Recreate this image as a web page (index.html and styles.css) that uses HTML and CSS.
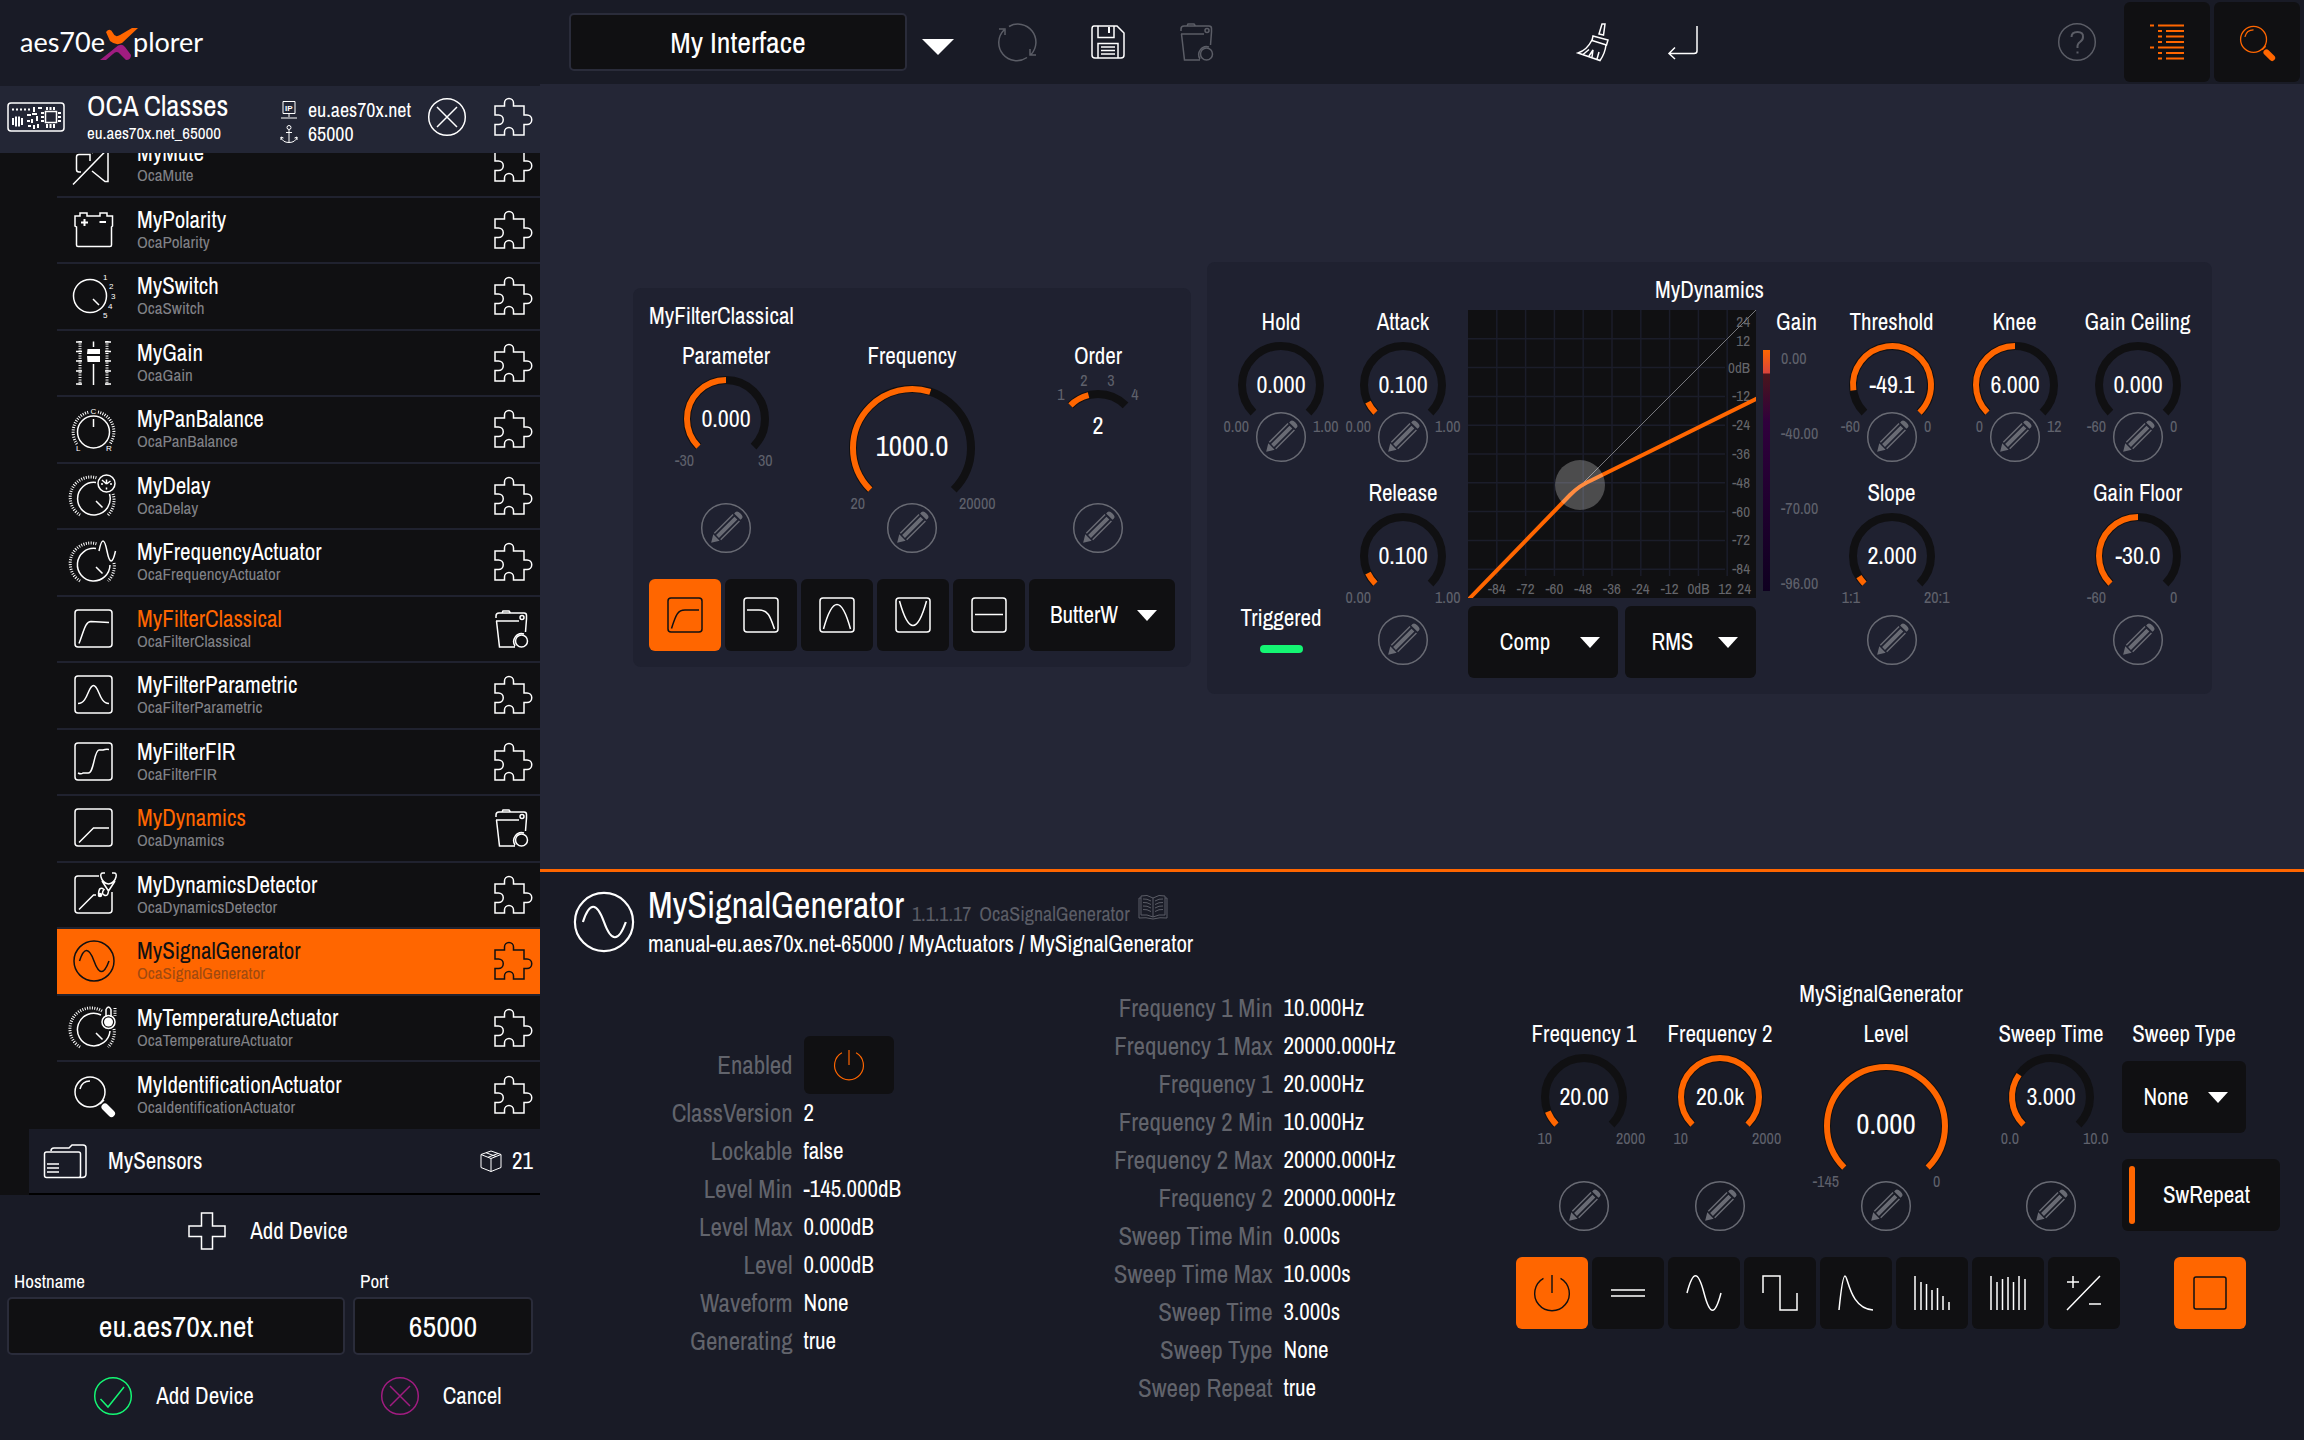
FILE: index.html
```html
<!DOCTYPE html>
<html lang="en">

<head>
    <meta charset="UTF-8">
    <meta name="viewport" content="width=device-width, initial-scale=1.0">
    <title>aes70explorer</title>
    <link rel="stylesheet" href="styles.css">
</head>

<body>
    <!-- icon sprite -->
    <svg class="sprite" aria-hidden="true">
        <symbol id="puzzle" viewBox="0 0 38 38">
            <path d="M1 8H10.500V5a4.500 4.500 0 0 1 9 0V8H30V17h3a4.500 4.500 0 0 1 0 9.500h-3V37H19.500V34a4.500 4.500 0 0 0-9 0v3H1V26.500H4.500a4.500 4.500 0 0 0 0-9.500H1Z"/>
        </symbol>
        <symbol id="trash" viewBox="0 0 38 38">
            <path d="M2 8V6q0-3 3-3H30q2.500 0 2.500 2.500V9l-1 13M8 3l1-2h6l1.500 2M2 11H25M2.500 11 5.500 37H21M30 24a8 8 0 0 0-9 12"/>
            <circle cx="28" cy="7.500" r="2"/>
            <circle cx="27.500" cy="31" r="6"/>
        </symbol>
        <symbol id="mute" viewBox="0 0 44 44">
            <path d="M1 43.500 40 3.500M9 31H7q-2.500 0-2.500-2.500V16q0-2.500 2.500-2.500H18V20M20 30 33 40.500h3V12M20 12 31 4"/>
        </symbol>
        <symbol id="polarity" viewBox="0 0 44 44">
            <path d="M3 8H8V5h7v3H28V5h7v3h5.500V18L39.500 19V37q0 1.500-1.500 1.500H6Q4.500 38.500 4.500 37V19L3 18Z"/>
            <path class="bold" d="M9 14.500h7M12.500 11v7M27.500 14h6.500"/>
        </symbol>
        <symbol id="switch" viewBox="0 0 44 44">
            <circle cx="18" cy="22" r="16.500"/>
            <path d="M21 25l6 6"/>
            <text x="31" y="6">1</text><text x="37" y="15">2</text><text x="39" y="25">3</text><text x="36" y="35">4</text><text x="31" y="44">5</text>
        </symbol>
        <symbol id="gain" viewBox="0 0 44 44">
            <path d="M21.500 .5V6M21.500 23V44"/>
            <path class="ticks" d="M8 0V44M35 0V44"/>
            <path d="M4 1h6M4 10.500h6M4 20h6M4 30h6M4 43h6M33 1h6M33 10.500h6M33 20h6M33 30h6M33 43h6"/>
            <path class="solid" d="M15.500 8H28L28 13H15ZM15 15H28L28 21H15.500Z"/>
        </symbol>
        <symbol id="pan" viewBox="0 0 44 44">
            <circle cx="21.500" cy="25" r="16"/>
            <path d="M21.500 12v8"/>
            <path class="ticks" d="M5 37A20.500 20.500 0 0 1 17 5M26 5A20.500 20.500 0 0 1 38 37"/>
            <text x="18.500" y="7">C</text><text x="4" y="44">L</text><text x="34" y="44">R</text>
        </symbol>
        <symbol id="delay" viewBox="0 0 44 44">
            <path d="M24 8.500A16.300 16.300 0 1 0 37.500 20M24 27l6.500 6.500M34.500 9.500V5.500M34.500 10 30 6M34.500 10l4-3M29 10h2M38 10h2M34.500 13.500v2"/>
            <path class="ticks" d="M8 41A20.500 20.500 0 0 1 25 4M41 20A20.500 20.500 0 0 1 36 41"/>
            <circle cx="34.500" cy="9.500" r="8.500"/>
        </symbol>
        <symbol id="freq" viewBox="0 0 44 44">
            <path d="M24 8.500A16.300 16.300 0 1 0 38 25M24 27l6.500 6.500M27 11Q31-9 35 11T43.500 11"/>
            <path class="ticks" d="M8 41A20.500 20.500 0 0 1 25 4M42 23A20.500 20.500 0 0 1 36 41"/>
        </symbol>
        <symbol id="temp" viewBox="0 0 44 44">
            <path d="M29 9A16.300 16.300 0 1 0 38 25M24 27l6.500 6.500M34 11V3.500q2.500-5 5 0v7.500"/>
            <path class="ticks" d="M8 41A20.500 20.500 0 0 1 30 5M42 23A20.500 20.500 0 0 1 36 41M43 2v8"/>
            <circle class="solid" cx="36.500" cy="16" r="4.500"/>
            <circle cx="36.500" cy="16" r="6.500"/>
        </symbol>
        <symbol id="classical" viewBox="0 0 44 44">
            <rect x="3" y="3" width="37" height="37" rx="3"/>
            <path d="M7 36.500C12 24 13 14.500 19 14.500L37 15.500"/>
        </symbol>
        <symbol id="parametric" viewBox="0 0 44 44">
            <rect x="3" y="3" width="37" height="37" rx="3"/>
            <path d="M6 30.500C16 30.500 16 12.500 21.500 12.500S27 30.500 37 30.500"/>
        </symbol>
        <symbol id="fir" viewBox="0 0 44 44">
            <rect x="3" y="3" width="37" height="37" rx="3"/>
            <path d="M6 33q3 1.500 5 0h5C22 34 22 10 27 10h4q3-1 6-.5"/>
        </symbol>
        <symbol id="dynamics" viewBox="0 0 44 44">
            <rect x="3" y="3" width="37" height="37" rx="3"/>
            <path d="M7 36.500 21.500 22H37"/>
        </symbol>
        <symbol id="detector" viewBox="0 0 44 44">
            <path d="M27 3H6Q3 3 3 6V37q0 3 3 3H37q3 0 3-3V19M7 36.500 21.500 22H24M33 0h-2q-3 0-2 4 1.500 6 7.500 7 6-1 7.500-7 1-4-2-4H40M30 8l6.500 10L43 8M36.500 18q-.5 6-4.500 4-3-2 0-5.500-5-4-5.500 4.500"/>
            <circle class="solid" cx="28" cy="22" r="2.300"/>
        </symbol>
        <symbol id="signal" viewBox="0 0 44 44">
            <circle cx="22" cy="22" r="20"/>
            <path d="M7.500 22C12 8 17 8 22 22S32 36 37 22"/>
        </symbol>
        <symbol id="glass" viewBox="0 0 44 44">
            <circle cx="18" cy="19" r="15"/>
            <path d="M8 16q2-8 10-8M28 31l4-4"/>
            <path class="handle" d="M33 34l6.500 6.500"/>
        </symbol>
        <symbol id="folder" viewBox="0 0 44 44">
            <path d="M3.500 38.500h32q2 0 2-2V15q0-2-2-2H3.500q-2 0-2 2V36.500q0 2 2 2ZM8 12q0-3 3-3H26l3-3h11q3 0 3 3V35q0 3.500-4 3.500H36M4 25H16M4 29H16M4 33H16"/>
        </symbol>
        <symbol id="cube" viewBox="0 0 22 22">
            <path d="M11 1 21 4.500V17.500L11 21.500 1 17.500V4.500ZM1 4.500 11 8.500 21 4.500M11 8.500V21.500M6 2.700 16 6.500M8 7.300l10-3.800"/>
        </symbol>
        <symbol id="board" viewBox="0 0 58 30">
            <rect x="1" y="1" width="56" height="28" rx="3"/>
            <rect x="38.500" y="9.500" width="11" height="11"/>
            <path class="bold" d="M5 7.500h2M9 7.500h2M13 7.500h2M17 7.500h2M21 7.500h2M6 16v7M9 14.500v10M12 14.500v10M15 16v7M20 13h4M27 5v5M31 6h4M25 12h5M20 19h3M25 17v4M30 14v5M27 23v4M31 22v4M21 24h3M40 5v3M43.500 5v3M47 5v3M40 22v4M43.500 22v4M47 22v4M34 11h3M34 15h3M34 19h3M51 11h3M51 15h3M51 19h3"/>
        </symbol>
        <symbol id="ip" viewBox="0 0 18 18">
            <path d="M3 .5H15V12.500H3ZM9 12.500V16M1 17H17"/>
            <text class="strong" x="5" y="10">IP</text>
        </symbol>
        <symbol id="anchor" viewBox="0 0 18 18">
            <circle cx="9" cy="2.500" r="2"/>
            <path d="M9 5V17.500M6 7.500h6M1 12q1.500 5.500 8 5.500t8-5.500M1 15v-3l2.500 1M17 15v-3l-2.500 1"/>
        </symbol>
        <symbol id="cross" viewBox="0 0 38 38">
            <circle cx="19" cy="19" r="18.300"/>
            <path d="M9 9 29 29M29 9 9 29"/>
        </symbol>
        <symbol id="check" viewBox="0 0 38 38">
            <circle cx="19" cy="19" r="18.300"/>
            <path d="M6.500 22l7.500 8L30 10"/>
        </symbol>
        <symbol id="plus" viewBox="0 0 38 38">
            <path d="M13.500 1h11V14H37V24.500H24.500V37h-11V24.500H1V14H13.500Z"/>
        </symbol>
        <symbol id="reload" viewBox="0 0 38 38">
            <path d="M10 3.500A18 18 0 0 1 32 31.500M28 34.500A18 18 0 0 1 5 7M0 6h6v6M31 26v6h6"/>
        </symbol>
        <symbol id="save" viewBox="0 0 38 38">
            <path d="M5 3H28L35 10V32q0 3-3 3H6q-3 0-3-3V6q0-3 2-3ZM9 3V14.500H25V3M9 35V20.500H29V35M12 24H26M12 27.500H26M12 31H26"/>
            <path class="bold" d="M20 4v6"/>
        </symbol>
        <symbol id="broom" viewBox="0 0 38 38">
            <path d="M28 1h3l-1.500 11-4.500-1ZM19 13l15 4-1.500 5L18 17.500ZM18 17Q13 27 4 30l22 7.500q5-7 6-15.500M9 31.500l6-5M15 33l4-6-1 7M23 36l2-7"/>
        </symbol>
        <symbol id="enter" viewBox="0 0 38 38">
            <path d="M33 3V28q0 2.500-3 2.500H5M11 24.500 5 30.500l6 5.500"/>
        </symbol>
        <symbol id="help" viewBox="0 0 38 38">
            <circle cx="19" cy="19" r="18.300"/>
            <path class="bold" d="M13.500 14q0-5 6-5t5.500 5q0 3-3 5t-2.500 6M19.500 28.500v2"/>
        </symbol>
        <symbol id="list" viewBox="0 0 38 38">
            <path class="bold" d="M2 2.500h4M10 2.500H36M10 8h4M18 8H36M10 13.500h4M18 13.500H36M10 19h4M18 19H36M2 24.500h4M10 24.500H36M10 30h4M18 30H36M10 35.500h4M18 35.500H36"/>
        </symbol>
        <symbol id="pencil" viewBox="0 0 50 50">
            <circle cx="25" cy="25" r="24.300"/>
            <g transform="rotate(45 25 25)">
                <path class="solid" d="M20.500 9V7q0-2.500 4.500-2.500T29.500 7v2ZM20.500 38.500h9L25 46ZM23 11h4V37h-4Z"/>
                <path d="M20.500 10.500V37M29.500 10.500V37"/>
            </g>
        </symbol>
        <symbol id="book" viewBox="0 0 30 26">
            <path d="M15 4Q9 0 3 2V21q6-1 12 2 6-3 12-2V2q-6-2-12 2ZM15 4V23M3 4H1V24q7-1 14 1 7-2 14-1V4H27M5 5q4-.5 8 2M5 8.500q4-.5 8 2M5 12q4-.5 8 2M5 15.500q4-.5 8 2M25 5q-4-.5-8 2M25 8.500q-4-.5-8 2M25 12q-4-.5-8 2M25 15.500q-4-.5-8 2"/>
        </symbol>
        <symbol id="power" viewBox="0 0 38 38">
            <path d="M10 3.500A18.300 18.300 0 1 0 28 3.500M19 0V19"/>
        </symbol>
        <symbol id="highpass" viewBox="0 0 36 36">
            <rect x="1" y="1" width="34" height="34" rx="3"/>
            <path d="M4.500 31.500C9 17 11 13 18 13H32"/>
        </symbol>
        <symbol id="lowpass" viewBox="0 0 36 36">
            <rect x="1" y="1" width="34" height="34" rx="3"/>
            <path d="M4 13H16C25 13 27 19 31.500 32"/>
        </symbol>
        <symbol id="bandpass" viewBox="0 0 36 36">
            <rect x="1" y="1" width="34" height="34" rx="3"/>
            <path d="M4.500 32Q18-17 31.500 32"/>
        </symbol>
        <symbol id="bandstop" viewBox="0 0 36 36">
            <rect x="1" y="1" width="34" height="34" rx="3"/>
            <path d="M4.500 4Q18 53 31.500 4"/>
        </symbol>
        <symbol id="allpass" viewBox="0 0 36 36">
            <rect x="1" y="1" width="34" height="34" rx="3"/>
            <path d="M4 17.500H32"/>
        </symbol>
        <symbol id="dc" viewBox="0 0 36 36"><path d="M1 15H35M1 21H35"/></symbol>
        <symbol id="sine" viewBox="0 0 36 36"><path d="M1 18C7-5 12-5 18 18S29 41 35 18"/></symbol>
        <symbol id="square" viewBox="0 0 36 36"><path d="M1 18V1H18V35H35V18"/></symbol>
        <symbol id="impulse" viewBox="0 0 36 36"><path d="M1 35C3 15 5 1 7 1 10 1 12 34 35 35"/></symbol>
        <symbol id="pink" viewBox="0 0 36 36"><path d="M1 1V35M7 7V35M12.500 9V35M18 15V35M23.500 13V35M29 21V35M35 27V35"/></symbol>
        <symbol id="white" viewBox="0 0 36 36"><path d="M1 1V35M7 7V35M12.500 4V35M18 2V35M23.500 7V35M29 1V35M35 4V35"/></symbol>
        <symbol id="sweep" viewBox="0 0 36 36"><path d="M1 35 34 1M1 7H13M7 1V13M23 29H35"/></symbol>
        <symbol id="stop" viewBox="0 0 36 36"><rect x="2" y="2" width="32" height="32" rx="2"/></symbol>
    </svg>

    <header class="topbar">
        <div class="brand">
            <svg class="logo" viewBox="0 0 186 40" role="img" aria-label="aes70explorer">
                <text x="0" y="28">aes70e</text>
                <path class="logo-top" d="M86 8q4-5 7 1 2 5 7 2L112 4h6L102 19q-6 3-12-2Z"/>
                <path class="logo-bottom" d="M80 36 95 24q6-6 10-1l6 8q0 5-5 5l-6-6q-3-4-7 0l-7 6Z"/>
                <text x="113" y="28">plorer</text>
            </svg>
        </div>
        <div class="toolbar">
            <div class="tools">
                <input class="field interface-name" type="text" value="My Interface" aria-label="Interface name">
                <button class="tool tool-caret" aria-label="Select interface"><span class="caret caret-big"></span></button>
                <button class="tool dim" aria-label="Reload"><svg class="icon"><use href="#reload"/></svg></button>
                <button class="tool" aria-label="Save"><svg class="icon"><use href="#save"/></svg></button>
                <button class="tool dim" aria-label="Delete"><svg class="icon"><use href="#trash"/></svg></button>
            </div>
            <div class="tools">
                <button class="tool" aria-label="Clear"><svg class="icon"><use href="#broom"/></svg></button>
                <button class="tool" aria-label="Enter"><svg class="icon"><use href="#enter"/></svg></button>
            </div>
            <div class="tools">
                <button class="tool dim" aria-label="Help"><svg class="icon"><use href="#help"/></svg></button>
                <button class="tool tool-on" aria-label="Tree"><svg class="icon"><use href="#list"/></svg></button>
                <button class="tool tool-on" aria-label="Details"><svg class="icon"><use href="#glass"/></svg></button>
            </div>
        </div>
    </header>

    <div class="content">
        <aside class="sidebar">
            <div class="device">
                <svg class="icon-board"><use href="#board"/></svg>
                <div class="device-name">
                    <h1>OCA Classes</h1>
                    <p>eu.aes70x.net_65000</p>
                </div>
                <div class="device-host">
                    <span><svg class="icon-tiny"><use href="#ip"/></svg>eu.aes70x.net</span>
                    <span><svg class="icon-tiny"><use href="#anchor"/></svg>65000</span>
                </div>
                <button class="plain" aria-label="Remove device"><svg class="icon"><use href="#cross"/></svg></button>
                <button class="plain" aria-label="Add all"><svg class="icon"><use href="#puzzle"/></svg></button>
            </div>

            <div class="tree">
                <ul id="tree"></ul>
            </div>

            <form class="add-device" id="form">
                <div class="add-title"><svg class="icon"><use href="#plus"/></svg>Add Device</div>
                <div class="add-grid">
                    <div>
                        <label for="hostname">Hostname</label>
                        <input class="field" type="text" id="hostname" value="eu.aes70x.net">
                    </div>
                    <div>
                        <label for="port">Port</label>
                        <input class="field" type="text" id="port" value="65000">
                    </div>
                    <button type="submit" class="form-btn"><svg class="icon green"><use href="#check"/></svg>Add Device</button>
                    <button type="button" class="form-btn"><svg class="icon purple"><use href="#cross"/></svg>Cancel</button>
                </div>
            </form>
        </aside>

        <main class="main">
            <section class="canvas">
                <div class="panel panel-filter">
                    <h2>MyFilterClassical</h2>
                    <div class="knobs filter-knobs" id="filterKnobs"></div>
                    <div class="btn-row">
                        <button class="btn active" aria-label="High pass"><svg><use href="#highpass"/></svg></button>
                        <button class="btn" aria-label="Low pass"><svg><use href="#lowpass"/></svg></button>
                        <button class="btn" aria-label="Band pass"><svg><use href="#bandpass"/></svg></button>
                        <button class="btn" aria-label="Band stop"><svg><use href="#bandstop"/></svg></button>
                        <button class="btn" aria-label="All pass"><svg><use href="#allpass"/></svg></button>
                        <div class="select">
                            <select aria-label="Filter shape"><option>ButterW</option></select>
                            <span class="caret"></span>
                        </div>
                    </div>
                </div>

                <div class="panel panel-dynamics">
                    <h2>MyDynamics</h2>
                    <div class="dynamics">
                        <div class="knobs dyn-knobs dyn-left" id="dynLeft"></div>
                        <div class="dyn-graph">
                            <svg class="graph" id="graph" viewBox="0 0 288 288"></svg>
                            <div class="btn-row">
                                <div class="select select-comp">
                                    <select aria-label="Dynamics type"><option>Comp</option></select>
                                    <span class="caret"></span>
                                </div>
                                <div class="select">
                                    <select aria-label="Detector law"><option>RMS</option></select>
                                    <span class="caret"></span>
                                </div>
                            </div>
                        </div>
                        <div class="meter">
                            <span class="knob-label">Gain</span>
                            <div class="meter-body">
                                <div class="meter-bar"></div>
                                <div class="meter-scale"><span>0.00</span><span>-40.00</span><span>-70.00</span><span>-96.00</span></div>
                            </div>
                        </div>
                        <div class="knobs dyn-knobs" id="dynRight"></div>
                    </div>
                </div>
            </section>

            <section class="details">
                <div class="details-head">
                    <svg class="icon-large"><use href="#signal"/></svg>
                    <div>
                        <div class="details-title">
                            <h2>MySignalGenerator</h2>
                            <span>1.1.1.17</span>
                            <span>OcaSignalGenerator</span>
                            <svg class="icon-book"><use href="#book"/></svg>
                        </div>
                        <p>manual-eu.aes70x.net-65000 / MyActuators / MySignalGenerator</p>
                    </div>
                </div>
                <div class="details-body">
                    <dl class="props" id="propsLeft"></dl>
                    <dl class="props" id="propsRight"></dl>
                    <div class="generator">
                        <h2>MySignalGenerator</h2>
                        <div class="knobs generator-knobs">
                            <div class="generator-dials" id="genKnobs"></div>
                            <div class="sweep">
                                <span class="knob-label">Sweep Type</span>
                                <div class="select">
                                    <select aria-label="Sweep Type"><option>None</option></select>
                                    <span class="caret"></span>
                                </div>
                                <button class="btn btn-repeat">SwRepeat</button>
                            </div>
                        </div>
                        <div class="btn-row">
                            <button class="btn active" aria-label="None"><svg class="icon"><use href="#power"/></svg></button>
                            <button class="btn" aria-label="DC"><svg><use href="#dc"/></svg></button>
                            <button class="btn" aria-label="Sine"><svg><use href="#sine"/></svg></button>
                            <button class="btn" aria-label="Square"><svg><use href="#square"/></svg></button>
                            <button class="btn" aria-label="Impulse"><svg><use href="#impulse"/></svg></button>
                            <button class="btn" aria-label="Pink noise"><svg><use href="#pink"/></svg></button>
                            <button class="btn" aria-label="White noise"><svg><use href="#white"/></svg></button>
                            <button class="btn" aria-label="Polarity test"><svg><use href="#sweep"/></svg></button>
                            <button class="btn active btn-stop" aria-label="Stop"><svg><use href="#stop"/></svg></button>
                        </div>
                    </div>
                </div>
            </section>
        </main>
    </div>

    <script src="script.js"></script>
</body>

</html>
```
FILE: styles.css
```css
* {
    margin: 0;
    padding: 0;
    box-sizing: border-box;
}

body {
    display: flex;
    flex-direction: column;
    height: 100vh;
    overflow: hidden;
    background-color: #191b26;
    color: #fff;
    font-family: "Archivo Narrow", "Liberation Sans Narrow", "Roboto Condensed", "Liberation Sans", sans-serif;
    font-size: 23px;
    line-height: 24px;
}

button,
input,
select {
    font: inherit;
    color: inherit;
    border: none;
    background: none;
}

button,
select {
    cursor: pointer;
}

h1,
h2 {
    font-size: 23px;
    font-weight: normal;
}

ul {
    list-style: none;
}

svg {
    display: block;
    flex: none;
    overflow: visible;
    fill: none;
    stroke: currentColor;
    stroke-width: 1.5;
}

svg text {
    fill: currentColor;
    stroke: none;
}

symbol {
    overflow: visible;
}

symbol text {
    font-family: "Liberation Sans", sans-serif;
    font-size: 8px;
}

symbol .strong {
    font-weight: bold;
}

.sprite {
    position: absolute;
    width: 0;
    height: 0;
}

.bold {
    stroke-width: 2;
}

.solid {
    fill: currentColor;
    stroke: none;
}

.ticks {
    stroke-width: 3;
    stroke-dasharray: 1 1.4;
}

.handle {
    stroke-width: 7;
    stroke-linecap: round;
}

.icon {
    width: 38px;
    height: 38px;
}

.icon-tiny {
    width: 18px;
    height: 18px;
    stroke-width: 1;
}

.green {
    color: #14f573;
}

.purple {
    color: #a01c80;
}

.field {
    display: block;
    width: 100%;
    height: 58px;
    border: 2px solid #2a2c3a;
    border-radius: 5px;
    background-color: #101012;
    font-size: 30px;
    text-align: center;
}

.caret {
    border: 10px solid transparent;
    border-top: 11px solid #fff;
    border-bottom: none;
}

.caret-big {
    border-width: 16px;
    border-top-width: 16px;
    border-bottom: none;
}

/* top bar */
.topbar {
    display: flex;
    height: 86px;
    flex: none;
}

.brand {
    width: 540px;
    padding: 24px 20px;
}

.logo {
    width: 186px;
    height: 40px;
    font-family: Lato, sans-serif;
    font-size: 27px;
}

.logo path {
    stroke: none;
}

.logo-top {
    fill: #ff6600;
}

.logo-bottom {
    fill: #a01c80;
}

.toolbar {
    flex: 1;
    display: flex;
    justify-content: space-between;
    padding: 0 4px 0 29px;
    border-bottom: 2px solid #242636;
}

.tools {
    display: flex;
    align-items: center;
    gap: 4px;
}

.interface-name {
    width: 338px;
}

.tool {
    display: flex;
    align-items: center;
    justify-content: center;
    width: 86px;
    height: 80px;
    border-radius: 6px;
}

.tool-caret {
    width: 60px;
    padding: 10px 6px 0 0;
}

.tool-on {
    background-color: #101012;
    color: #ff6600;
}

.dim {
    color: #5b5d66;
}

.content {
    flex: 1;
    display: flex;
    min-height: 0;
}

/* sidebar */
.sidebar {
    display: flex;
    flex-direction: column;
    width: 540px;
    flex: none;
}

.device {
    display: flex;
    align-items: center;
    height: 67px;
    padding: 0 8px 5px 7px;
    background-color: #232635;
}

.icon-board {
    width: 58px;
    height: 30px;
}

.device-name {
    width: 193px;
    margin-left: 22px;
}

.device-name h1 {
    font-size: 29px;
    line-height: 32px;
}

.device-name p {
    font-size: 17px;
    line-height: 22px;
}

.device-host {
    flex: 1;
    padding-top: 10px;
    font-size: 20px;
}

.device-host span {
    display: flex;
    align-items: center;
    gap: 10px;
}

.plain + .plain {
    margin-left: 28px;
}

.tree {
    flex: 1;
    display: flex;
    min-height: 0;
    overflow: hidden;
    background-color: #101012;
}

/* the list is scrolled a little, so the first row is cut */
#tree {
    flex: 1;
    display: grid;
    grid-auto-rows: 1fr;
    margin-top: -22px;
}

.node {
    display: flex;
    align-items: center;
    margin-left: 57px;
    padding: 0 8px 0 15px;
    border-bottom: 2px solid #20222f;
}

.node-icon {
    width: 44px;
    height: 44px;
}

.node-text {
    flex: 1;
    margin-left: 21px;
}

.node-text small {
    display: block;
    color: #808186;
    font-size: 17px;
    line-height: 20px;
}

.node.used h3 {
    color: #ff6600;
}

.node h3 {
    font-size: 23px;
    font-weight: normal;
}

.node.selected {
    background-color: #ff6600;
    color: #101012;
}

.node.selected small {
    color: #a04a10;
}

.node.folder {
    margin-left: 29px;
    padding: 0 7px 0 14px;
    background-color: #191b26;
    border-bottom-color: #000;
}

.node.last {
    border-bottom: none;
}

.count {
    display: flex;
    align-items: center;
    gap: 10px;
}

.icon-cube {
    width: 22px;
    height: 22px;
    stroke-width: 1;
}

.add-device {
    padding: 17px 7px 25px;
}

.add-title {
    display: flex;
    align-items: center;
    justify-content: center;
    gap: 24px;
    margin-bottom: 19px;
    padding-right: 4px;
}

.add-grid {
    display: grid;
    grid-template-columns: 338px 1fr;
    gap: 22px 8px;
}

.add-grid label {
    display: block;
    padding: 0 7px 4px;
    font-size: 19px;
}

.form-btn {
    display: flex;
    align-items: center;
    justify-content: center;
    gap: 24px;
    padding-right: 4px;
}

/* canvas with free placed panels */
.main {
    flex: 1;
    display: flex;
    flex-direction: column;
    min-width: 0;
}

.canvas {
    flex: 1;
    position: relative;
    background-color: #242636;
}

.panel {
    position: absolute;
    border-radius: 8px;
    background-color: #1f2130;
}

.panel-filter {
    left: 93px;
    top: 202px;
    padding: 16px 0;
}

.panel-filter h2,
.panel-filter .btn-row {
    padding: 0 16px;
}

.panel-dynamics {
    left: 667px;
    top: 176px;
    padding: 16px 13px;
}

.panel-dynamics h2 {
    margin-bottom: 8px;
    text-align: center;
}

.filter-knobs {
    display: grid;
    grid-template-columns: repeat(3, 186px);
    height: 209px;
    margin: 16px 0 26px;
}

.knob {
    display: flex;
    flex-direction: column;
    align-items: center;
    min-height: 0;
}

.knob-label {
    text-align: center;
}

.dial {
    flex: 0 1 auto;
    min-height: 0;
}

.knob-edit {
    position: relative;
    flex: none;
    margin-top: auto;
    color: #696b74;
}

.knob-edit svg {
    width: 50px;
    height: 50px;
}

.dial-track {
    stroke: #101012;
    stroke-width: 8;
}

.dial-fill {
    stroke: #ff6600;
    stroke-width: 6;
}

.dial-value {
    font-size: 24px;
    text-anchor: middle;
}

.large .dial-value {
    font-size: 29px;
}

.dial-scale {
    color: #5f616c;
    font-size: 16px;
}

.dial-scale .end {
    text-anchor: end;
}

.dial-scale .mid {
    text-anchor: middle;
}

.btn-row {
    display: flex;
    gap: 4px;
}

.btn {
    display: flex;
    align-items: center;
    justify-content: center;
    width: 72px;
    height: 72px;
    border-radius: 6px;
    background-color: #101012;
}

.btn svg {
    width: 36px;
    height: 36px;
}

.btn.active {
    background-color: #ff6600;
    color: #101012;
}

.select {
    position: relative;
    flex: 1;
    height: 72px;
}

.select select {
    width: 100%;
    height: 100%;
    padding-right: 36px;
    border-radius: 6px;
    background-color: #101012;
    appearance: none;
    text-align-last: center;
}

.select .caret {
    position: absolute;
    right: 18px;
    top: 31px;
    pointer-events: none;
}

.dynamics {
    display: flex;
}

.dyn-knobs {
    display: grid;
    grid-template-columns: repeat(3, 123px);
    grid-template-rows: 152px 184px;
    row-gap: 19px;
}

.dyn-left {
    grid-template-columns: repeat(2, 122px);
}

.triggered {
    display: flex;
    flex-direction: column;
    align-items: center;
    justify-content: end;
    gap: 15px;
    padding-bottom: 12px;
}

.led {
    width: 43px;
    height: 8px;
    border-radius: 4px;
    background-color: #14f573;
}

.dyn-graph {
    width: 288px;
    margin: 0 7px 0 4px;
}

.dyn-graph .btn-row {
    gap: 7px;
    margin-top: 8px;
}

.select-comp {
    flex: 0 0 150px;
}

.graph {
    width: 288px;
    height: 288px;
    overflow: hidden;
    background-color: #101012;
    color: #65666b;
    font-size: 15px;
}

.graph .grid {
    stroke: #1b1d2a;
}

.graph .diagonal {
    stroke: #77787d;
    stroke-width: 1;
}

.graph .curve {
    stroke: #ff6600;
    stroke-width: 4;
}

.graph .handle-dot {
    fill: #fff;
    fill-opacity: 0.25;
    stroke: none;
}

.meter {
    display: flex;
    flex-direction: column;
    width: 67px;
}

.meter-body {
    display: flex;
    gap: 11px;
    height: 241px;
    margin-top: 16px;
}

.meter-bar {
    width: 7px;
    background: linear-gradient(#ff6600 0, #d9443c 23px, #4a161c 24px, #30003c 72px, #0f0020 100%);
}

.meter-scale {
    display: flex;
    flex-direction: column;
    justify-content: space-between;
    color: #5f616c;
    font-size: 16px;
    line-height: 16px;
}

/* details */
.details {
    border-top: 3px solid #ff6600;
}

.details-head {
    display: flex;
    gap: 12px;
    height: 86px;
    padding: 18px 32px 0;
}

.icon-large {
    width: 64px;
    height: 64px;
}

.details-title {
    display: flex;
    align-items: end;
    gap: 8px;
    color: #5b5d66;
    font-size: 20px;
}

.details-title h2 {
    margin-bottom: 6px;
    color: #fff;
    font-size: 36px;
    line-height: 30px;
}

.icon-book {
    width: 30px;
    height: 26px;
    margin-bottom: 6px;
    stroke-width: 1;
}

.details-head p {
    margin-top: 6px;
}

.details-body {
    display: flex;
}

.props {
    flex: 1;
    align-self: center;
    display: grid;
    grid-template-columns: 7fr 6fr;
    column-gap: 11px;
    padding: 31px 0 33px;
    line-height: 38px;
}

.props dt {
    align-self: center;
    color: #62646c;
    font-size: 25px;
    text-align: right;
}

.props .btn {
    width: 90px;
    height: 58px;
    color: #ff6600;
}

.props .btn svg {
    width: 30px;
    height: 30px;
}

.generator {
    width: 804px;
    padding: 24px 58px 0 16px;
}

.generator h2 {
    text-align: center;
}

.generator-knobs {
    display: flex;
    height: 209px;
    margin: 16px 0 26px;
}

.generator-dials {
    display: grid;
    grid-template-columns: 136px 136px 196px 134px;
}

.sweep {
    display: flex;
    flex-direction: column;
    width: 124px;
    margin-left: 4px;
}

.sweep .select {
    flex: none;
    margin: 15px 0 26px;
}

.btn-repeat {
    justify-content: start;
    width: 158px;
    padding: 7px;
}

.btn-repeat::before {
    content: "";
    width: 6px;
    height: 58px;
    margin-right: 28px;
    border-radius: 3px;
    background-color: #ff6600;
}

.btn-stop {
    margin-left: auto;
}
```
FILE: script.js
```js
const nodes = [
    { name: "MyMute", cls: "OcaMute", icon: "mute" },
    { name: "MyPolarity", cls: "OcaPolarity", icon: "polarity" },
    { name: "MySwitch", cls: "OcaSwitch", icon: "switch" },
    { name: "MyGain", cls: "OcaGain", icon: "gain" },
    { name: "MyPanBalance", cls: "OcaPanBalance", icon: "pan" },
    { name: "MyDelay", cls: "OcaDelay", icon: "delay" },
    { name: "MyFrequencyActuator", cls: "OcaFrequencyActuator", icon: "freq" },
    { name: "MyFilterClassical", cls: "OcaFilterClassical", icon: "classical", state: "used" },
    { name: "MyFilterParametric", cls: "OcaFilterParametric", icon: "parametric" },
    { name: "MyFilterFIR", cls: "OcaFilterFIR", icon: "fir" },
    { name: "MyDynamics", cls: "OcaDynamics", icon: "dynamics", state: "used" },
    { name: "MyDynamicsDetector", cls: "OcaDynamicsDetector", icon: "detector" },
    { name: "MySignalGenerator", cls: "OcaSignalGenerator", icon: "signal", state: "selected" },
    { name: "MyTemperatureActuator", cls: "OcaTemperatureActuator", icon: "temp" },
    { name: "MyIdentificationActuator", cls: "OcaIdentificationActuator", icon: "glass", state: "last" }
];

// angles are degrees along the 270 degree track
const knobs = {
    filterKnobs: [
        { label: "Parameter", value: "0.000", min: "-30", max: "30", to: 135 },
        { label: "Frequency", value: "1000.0", min: "20", max: "20000", to: 153, large: true },
        { label: "Order", value: "2", steps: true }
    ],
    dynLeft: [
        { label: "Hold", value: "0.000", min: "0.00", max: "1.00", to: 0 },
        { label: "Attack", value: "0.100", min: "0.00", max: "1.00", to: 19 },
        { led: "Triggered" },
        { label: "Release", value: "0.100", min: "0.00", max: "1.00", to: 19 }
    ],
    dynRight: [
        { label: "Threshold", value: "-49.1", min: "-60", max: "0", from: 37, to: 270 },
        { label: "Knee", value: "6.000", min: "0", max: "12", to: 135 },
        { label: "Gain Ceiling", value: "0.000", min: "-60", max: "0", to: 0 },
        { label: "Slope", value: "2.000", min: "1:1", max: "20:1", to: 13 },
        { empty: true },
        { label: "Gain Floor", value: "-30.0", min: "-60", max: "0", to: 135 }
    ],
    genKnobs: [
        { label: "Frequency 1", value: "20.00", min: "10", max: "2000", to: 23 },
        { label: "Frequency 2", value: "20.0k", min: "10", max: "2000", to: 270 },
        { label: "Level", value: "0.000", min: "-145", max: "0", to: 270, large: true },
        { label: "Sweep Time", value: "3.000", min: "0.0", max: "10.0", to: 80 }
    ]
};

const props = {
    propsLeft: [
        ["Enabled", `<button class="btn" aria-label="Enabled"><svg><use href="#power"/></svg></button>`],
        ["ClassVersion", "2"],
        ["Lockable", "false"],
        ["Level Min", "-145.000dB"],
        ["Level Max", "0.000dB"],
        ["Level", "0.000dB"],
        ["Waveform", "None"],
        ["Generating", "true"]
    ],
    propsRight: [
        ["Frequency 1 Min", "10.000Hz"],
        ["Frequency 1 Max", "20000.000Hz"],
        ["Frequency 1", "20.000Hz"],
        ["Frequency 2 Min", "10.000Hz"],
        ["Frequency 2 Max", "20000.000Hz"],
        ["Frequency 2", "20000.000Hz"],
        ["Sweep Time Min", "0.000s"],
        ["Sweep Time Max", "10.000s"],
        ["Sweep Time", "3.000s"],
        ["Sweep Type", "None"],
        ["Sweep Repeat", "true"]
    ]
};

function nodeHtml(n) {
    const action = n.state === "used" ? "trash" : "puzzle";
    return `<li class="node ${n.state || ""}">
        <svg class="node-icon"><use href="#${n.icon}"/></svg>
        <div class="node-text"><h3>${n.name}</h3><small>${n.cls}</small></div>
        <button class="plain" aria-label="${action} ${n.name}"><svg class="icon"><use href="#${action}"/></svg></button>
    </li>`;
}

function arc(cls, cy, r, start, from, to) {
    if (to <= from) return "";
    return `<circle class="${cls}" cx="61" cy="${cy}" r="${r}" pathLength="360"
        stroke-dasharray="${to - from} 360" transform="rotate(${start + from} 61 ${cy})"/>`;
}

function dialHtml(k) {
    if (k.steps) {
        return `<svg class="dial" width="122" height="102">
            ${arc("dial-track", 65, 39, 225, 0, 90)}
            ${arc("dial-fill", 65, 39, 225, 0, 31)}
            <text class="dial-value" x="61" y="66">${k.value}</text>
            <g class="dial-scale">
                <text class="mid" x="24" y="32">1</text><text class="mid" x="47" y="18">2</text>
                <text class="mid" x="74" y="18">3</text><text class="mid" x="98" y="32">4</text>
            </g>
        </svg>`;
    }
    const r = k.large ? 59 : 39;
    const cy = k.large ? 80 : 51;
    const dx = k.large ? 47 : 32;
    const dy = k.large ? 61 : 47;
    return `<svg class="dial ${k.large ? "large" : ""}" width="122" height="${k.large ? 146 : 102}">
        ${arc("dial-track", cy, r, 135, 0, 270)}
        ${arc("dial-fill", cy, r, 135, k.from || 0, k.to)}
        <text class="dial-value" x="61" y="${cy + 8}">${k.value}</text>
        <g class="dial-scale">
            <text class="end" x="${61 - dx}" y="${cy + dy}">${k.min}</text>
            <text x="${61 + dx}" y="${cy + dy}">${k.max}</text>
        </g>
    </svg>`;
}

function knobHtml(k) {
    if (k.empty) return `<div></div>`;
    if (k.led) return `<div class="triggered"><span>${k.led}</span><div class="led"></div></div>`;
    return `<div class="knob">
        <span class="knob-label">${k.label}</span>
        ${dialHtml(k)}
        <button class="knob-edit" aria-label="Edit ${k.label}"><svg><use href="#pencil"/></svg></button>
    </div>`;
}

function drawGraph() {
    const labels = ["-84", "-72", "-60", "-48", "-36", "-24", "-12", "0dB", "12"];
    let html = "";
    labels.forEach((text, i) => {
        const p = (i + 1) * 28.8;
        html += `<path class="grid" d="M${p} 0V266M0 ${288 - p}H257"/>
            <text x="${i === 8 ? 257 : p}" y="284" text-anchor="middle">${text}</text>
            <text x="282" y="${i === 8 ? 36 : 293 - p}" text-anchor="end">${text}</text>`;
    });
    html += `<text x="283" y="284" text-anchor="end">24</text>
        <text x="282" y="17" text-anchor="end">24</text>
        <path class="diagonal" d="M116 172 288 0"/>
        <path class="curve" d="M1 289 102 185Q112 175 124 170L290 88"/>
        <circle class="handle-dot" cx="112" cy="175" r="25"/>`;
    document.getElementById("graph").innerHTML = html;
}

document.getElementById("tree").innerHTML = nodes.map(nodeHtml).join("") + `
    <li class="node folder">
        <svg class="node-icon"><use href="#folder"/></svg>
        <div class="node-text"><h3>MySensors</h3></div>
        <span class="count"><svg class="icon-cube"><use href="#cube"/></svg>21</span>
    </li>`;

for (const id in knobs) {
    document.getElementById(id).innerHTML = knobs[id].map(knobHtml).join("");
}

for (const id in props) {
    document.getElementById(id).innerHTML = props[id].map(([name, value]) => `<dt>${name}</dt><dd>${value}</dd>`).join("");
}

drawGraph();

document.getElementById("form").addEventListener("submit", (e) => e.preventDefault());
```
